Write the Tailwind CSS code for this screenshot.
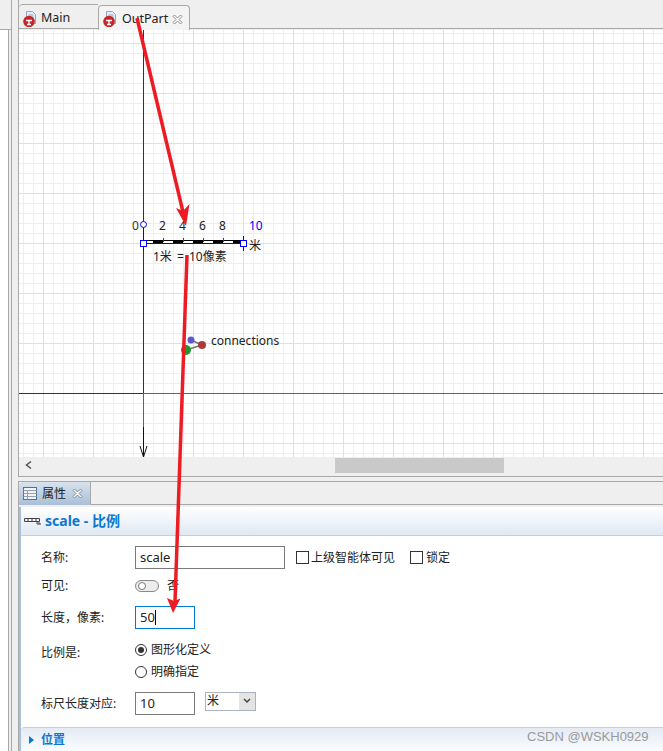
<!DOCTYPE html>
<html>
  <head>
    <meta charset="utf-8" />
    <title>OutPart scale</title>
    <script src="https://cdn.jsdelivr.net/npm/@tailwindcss/browser@4"></script>
  </head>
  <body class="bg-[#efefef]">
    <div class="relative flex w-[663px] h-[751px] overflow-hidden text-xs text-[#222] font-['Noto_Sans','Noto_Sans_CJK_SC',sans-serif]">
      <!-- left strip, the panel next to the editor -->
      <div class="w-[18px] shrink-0 flex">
        <div class="w-[12px] flex flex-col border-r border-[#a8a8a8]">
          <div class="h-[30px] border-b border-[#a8a8a8]"></div>
          <div class="flex-1 w-[9px] bg-white border-r border-[#a8a8a8]"></div>
        </div>
        <div class="w-[6px]"></div>
      </div>

      <div class="flex-1 flex flex-col min-w-0">
        <!-- editor tabs -->
        <div class="h-[30px] flex items-end border-l border-[#a8a8a8] relative">
          <div class="absolute left-0 right-0 bottom-[1px] border-b border-[#a8a8a8]"></div>
          <div class="w-[79px] h-[25px] flex items-center pl-[3px] pt-[3px] gap-[4px] border-t border-[#a8a8a8] rounded-tl mb-[1px]">
            <svg width="15" height="16" viewBox="0 0 15 16">
              <path d="M4.500 .5h6l3 3v9h-9z" fill="#e4ecf6" stroke="#8fa6c4" />
              <path d="M6.500 4h5M6.500 6h5" stroke="#8fa6c4" />
              <circle cx="7" cy="10.500" r="5.800" fill="#c4262a" />
              <path d="M4 9.500h6M7 9.500v3.500M5 13.500h4" stroke="#fff" stroke-width="1.300" />
            </svg>
            <span class="text-[12.5px]">Main</span>
          </div>
          <div class="relative w-[92px] h-[25px] flex items-center pl-[3px] pt-[2px] gap-[5px] bg-[#f4f4f4] border border-b-0 border-[#a8a8a8] rounded-t z-10">
            <svg width="15" height="16" viewBox="0 0 15 16">
              <path d="M4.500 .5h6l3 3v9h-9z" fill="#e4ecf6" stroke="#8fa6c4" />
              <path d="M6.500 4h5M6.500 6h5" stroke="#8fa6c4" />
              <circle cx="7" cy="10.500" r="5.800" fill="#c4262a" />
              <path d="M4 9.500h6M7 9.500v3.500M5 13.500h4" stroke="#fff" stroke-width="1.300" />
            </svg>
            <span class="text-[12.5px]">OutPart</span>
            <svg class="-ml-[1px]" width="11" height="11" viewBox="0 0 11 11">
              <path d="M1 2.500 2.500 1 5.500 4 8.500 1 10 2.500 7 5.500 10 8.500 8.500 10 5.500 7 2.500 10 1 8.500 4 5.500z" fill="#fff" stroke="#8a8a8a" />
            </svg>
          </div>
        </div>

        <!-- graphical editor -->
        <div class="border-l border-[#a8a8a8] h-[446px] flex flex-col">
          <div class="relative h-[427px] bg-white bg-[linear-gradient(90deg,#e0e0e0_1px,transparent_1px),linear-gradient(#e0e0e0_1px,transparent_1px),linear-gradient(90deg,#eeeeee_1px,transparent_1px),linear-gradient(#eeeeee_1px,transparent_1px)] [background-size:50px_50px,50px_50px,10px_10px,10px_10px] [background-position:24px_0,0_13px,4px_0,0_3px]">
            <svg class="absolute left-0 top-0" width="644" height="427" viewBox="19 30 644 427" font-family="'Noto Sans','Noto Sans CJK SC',sans-serif" font-size="12">
              <path d="M143.500 30V393" stroke="#333" />
              <path d="M19 393.500H143" stroke="#333" />
              <path d="M143 393.500H663" stroke="#2874b0" />
              <path d="M143.500 394V427" stroke="#2874b0" />
              <path d="M143.500 427V457M140 446l3.500 11 3.500-11" stroke="#111" fill="none" />

              <!-- scale element -->
              <text x="132" y="230" fill="#333">0</text>
              <text x="159" y="230" fill="#222">2</text>
              <text x="179" y="230" fill="#222">4</text>
              <text x="199" y="230" fill="#222">6</text>
              <text x="219" y="230" fill="#222">8</text>
              <text x="249" y="230" fill="#0000ff">10</text>
              <circle cx="143.500" cy="224.500" r="3" fill="#fff" stroke="#0000ff" />
              <path d="M143.500 228V251M243.500 236V251" stroke="#0000ff" />
              <rect x="143" y="240" width="100" height="3" fill="#fff" />
              <path d="M146 240.500H241" stroke="#000" />
              <path d="M153 241.500h10M173 241.500h10M193 241.500h10M213 241.500h10M233 241.500h8" stroke="#000" stroke-width="3" />
              <path d="M163.500 238v4M183.500 238v4M203.500 238v4M223.500 238v4" stroke="#444" />
              <path d="M143 243.500H244" stroke="#0000ff" />
              <rect x="140.500" y="240.500" width="6" height="6" fill="#fff" stroke="#0000ff" />
              <rect x="240.500" y="240.500" width="6" height="6" fill="#fff" stroke="#0000ff" />
              <text x="249" y="250" fill="#222">米</text>
              <text x="153" y="261" fill="#222" word-spacing="2">1米 = 10像素</text>

              <!-- connections -->
              <path d="M191 340l11 5M202 345l-16 5" stroke="#777" stroke-width="1.500" />
              <circle cx="191" cy="340" r="3.500" fill="#5a5acb" />
              <circle cx="202" cy="345" r="4" fill="#a83c3c" />
              <circle cx="186" cy="350" r="5" fill="#22962c" />
              <text x="211" y="345" fill="#222">connections</text>
            </svg>
          </div>
          <!-- horizontal scrollbar -->
          <div class="relative h-[19px] flex items-start">
            <span class="ml-[6px] mt-[4px] w-[8px] text-[#555]">
              <svg width="7" height="8" viewBox="0 0 7 8"><path d="M6 .5 1.500 4 6 7.500" stroke="#555" stroke-width="1.500" fill="none" /></svg>
            </span>
            <div class="ml-[302px] mt-[1px] w-[169px] h-[15px] bg-[#c9c9c9]"></div>
          </div>
        </div>

        <div class="h-[5px] border-t border-[#a8a8a8]"></div>

        <!-- properties view -->
        <div class="flex-1 flex flex-col border-l border-[#a8a8a8] min-h-0">
          <div class="h-[24px] border-t border-b border-[#a8a8a8] flex relative">
            <div class="w-[72px] h-[23px] flex items-center pl-[4px] gap-[5px] bg-[linear-gradient(#d8e2ee,#a9bfd8)] border-r border-[#a8a8a8] rounded-tl">
              <svg width="14" height="13" viewBox="0 0 14 13">
                <rect x=".5" y=".5" width="13" height="12" fill="#f2f2f2" stroke="#56708f" />
                <path d="M.5 3.500h13M.5 6.500h13M.5 9.500h13M4.500 3.500v9" stroke="#8fa3bb" />
              </svg>
              <span>属性</span>
              <svg class="ml-[1px]" width="11" height="11" viewBox="0 0 11 11">
                <path d="M1 2.500 2.500 1 5.500 4 8.500 1 10 2.500 7 5.500 10 8.500 8.500 10 5.500 7 2.500 10 1 8.500 4 5.500z" fill="#fff" stroke="#7a8796" />
              </svg>
            </div>
          </div>
          <div class="flex-1 mt-[2px] flex flex-col bg-white border-l-2 border-[#a9c0dc] min-h-0">
            <div class="h-[29px] flex items-center pl-[3px] gap-[4px] bg-[linear-gradient(#fff,#e0e8f3)] border-b border-[#c0cfe0]">
              <svg width="17" height="8" viewBox="0 0 17 8">
                <path d="M.5 1.500h15v3H.5zM4 1.500v3M8 1.500v3M12 1.500v3M12 6h4v2M14 6v2" stroke="#444" fill="none" />
              </svg>
              <span class="text-[14px] font-bold text-[#0a78d0]">scale - 比例</span>
            </div>

            <div class="flex-1 pl-[20px] pt-[10px] flex flex-col">
              <div class="flex items-center h-[23px]">
                <span class="w-[94px] pt-[1px]">名称:</span>
                <div class="w-[150px] h-[23px] border border-[#7a7a7a] pl-[4px] leading-[21px] text-[13px]">scale</div>
                <span class="ml-[11px] w-[13px] h-[13px] border border-[#333]"></span>
                <span class="ml-[2px]">上级智能体可见</span>
                <span class="ml-[15px] w-[13px] h-[13px] border border-[#333]"></span>
                <span class="ml-[3px]">锁定</span>
              </div>
              <div class="flex items-center h-[23px] mt-[5px]">
                <span class="w-[94px] pt-[1px]">可见:</span>
                <span class="w-[24px] h-[12px] rounded-full border border-[#8a8a8a] bg-[#ececec] flex items-center pl-[2px]">
                  <span class="w-[8px] h-[8px] rounded-full bg-white border border-[#777]"></span>
                </span>
                <span class="ml-[8px]">否</span>
              </div>
              <div class="flex items-center h-[23px] mt-[9px]">
                <span class="w-[94px] pt-[1px]">长度，像素:</span>
                <div class="w-[60px] h-[23px] border border-[#0078d7] pl-[4px] leading-[21px] text-[13px] flex items-center">50<span class="w-px h-[15px] bg-black"></span></div>
              </div>
              <div class="flex h-[42px] mt-[11px]">
                <span class="w-[94px] pt-[5px]">比例是:</span>
                <div class="flex flex-col gap-[3px]">
                  <div class="flex items-center gap-[4px] h-[20px]">
                    <span class="w-[12px] h-[12px] rounded-full border border-[#333] flex items-center justify-center"><span class="w-[6px] h-[6px] rounded-full bg-[#333]"></span></span>
                    <span>图形化定义</span>
                  </div>
                  <div class="flex items-center gap-[4px] h-[20px]">
                    <span class="w-[12px] h-[12px] rounded-full border border-[#333]"></span>
                    <span>明确指定</span>
                  </div>
                </div>
              </div>
              <div class="flex items-center h-[23px] mt-[10px]">
                <span class="w-[94px] pt-[1px]">标尺长度对应:</span>
                <div class="w-[60px] h-[23px] border border-[#7a7a7a] pl-[4px] leading-[21px] text-[13px]">10</div>
                <div class="ml-[10px] -mt-[5px] w-[51px] h-[19px] border border-[#a9b4c0] flex justify-between bg-white">
                  <span class="pl-[1px] leading-[15px]">米</span>
                  <span class="w-[16px] bg-[#e4e4e4] flex items-center justify-center">
                    <svg width="8" height="6" viewBox="0 0 8 6"><path d="M1 1l3 3 3-3" stroke="#444" stroke-width="1.500" fill="none" /></svg>
                  </span>
                </div>
              </div>
            </div>

            <div class="h-[24px] flex items-center pl-[8px] gap-[7px] border-t border-[#c0cfe0] rounded-tl bg-[linear-gradient(#e4ebf5,#fafcfe)]">
              <svg width="5" height="8" viewBox="0 0 5 8"><path d="M0 0l5 4-5 4z" fill="#0a78d0" /></svg>
              <span class="font-bold text-[#0a78d0]">位置</span>
            </div>
          </div>
        </div>
      </div>

      <!-- red annotation arrows over the screenshot -->
      <svg class="absolute left-0 top-0 z-20 pointer-events-none" width="663" height="751" viewBox="0 0 663 751">
        <path d="M137 18 183 212" stroke="#ed1c24" stroke-width="3.500" fill="none" />
        <path d="M186 226 176 208 183 211 189.500 204z" fill="#ed1c24" />
        <path d="M187 255 175 602" stroke="#ed1c24" stroke-width="3.500" fill="none" />
        <path d="M173 613 167 598 174 601 180.500 598.500z" fill="#ed1c24" />
      </svg>

      <span class="absolute z-20 left-[527px] top-[728px] text-[13px] text-[#9a9a9a] font-['Liberation_Sans',sans-serif]">CSDN @WSKH0929</span>
    </div>
  </body>
</html>
